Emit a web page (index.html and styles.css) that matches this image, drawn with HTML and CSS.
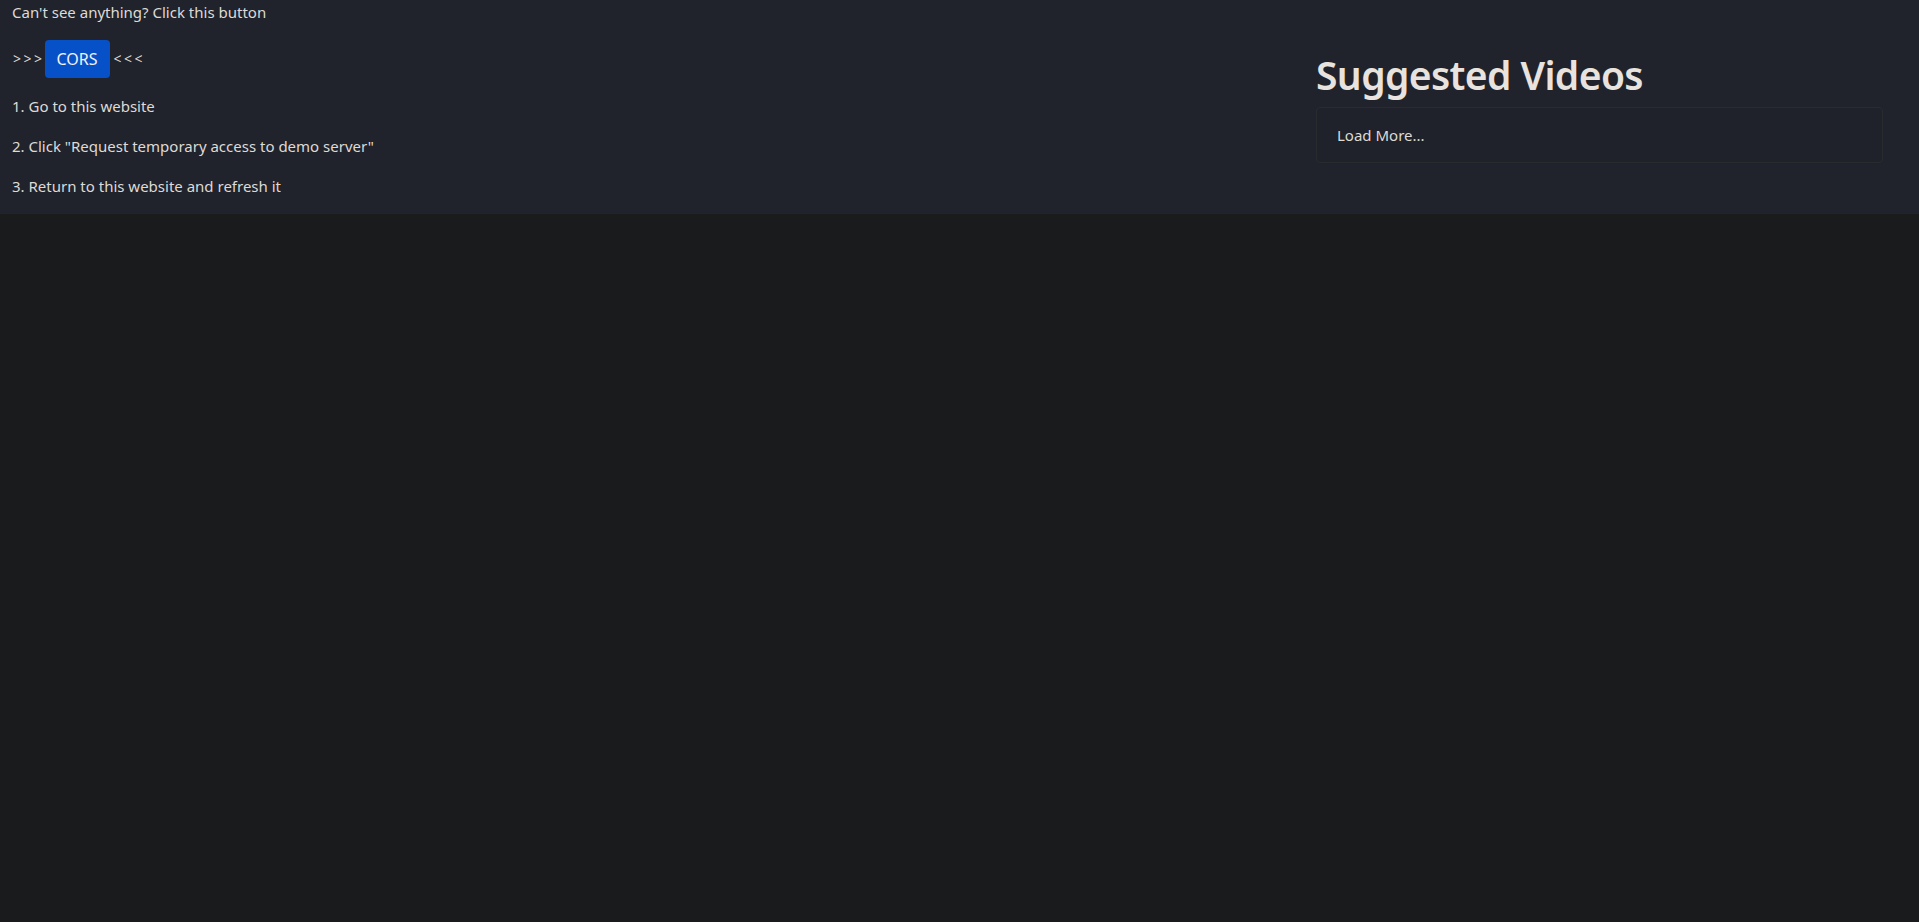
FILE: index.html
```html
<!DOCTYPE html>
<html lang="en">
<head>
<meta charset="utf-8">
<title>Videos</title>
<link rel="stylesheet" href="styles.css">
</head>
<body>
<div class="top">
  <div class="left">
    <p class="line first">Can't see anything? Click this button</p>
    <p class="line cors-row"><span class="arrows">&gt;&gt;&gt;</span><a class="btn" href="#">CORS</a><span class="arrows">&lt;&lt;&lt;</span></p>
    <p class="line">1. Go to this website</p>
    <p class="line">2. Click "Request temporary access to demo server"</p>
    <p class="line">3. Return to this website and refresh it</p>
  </div>
  <div class="right">
    <h1 class="title">Suggested Videos</h1>
    <div class="card">Load More...</div>
  </div>
</div>
</body>
</html>
```

FILE: styles.css
```css
html, body {
  margin: 0;
  padding: 0;
}
body {
  background: #1a1b1d;
  color: #dedad6;
  font-family: "Noto Sans", "Open Sans", sans-serif;
  font-size: 15px;
  line-height: 24px;
  min-height: 922px;
}
.top {
  background: #20232c;
  display: grid;
  grid-template-columns: 1fr 567px;
  padding: 0 36px 0 12px;
}
.line {
  margin: 16px 0 0 0;
  height: 24px;
  white-space: nowrap;
}
.line.first {
  margin-top: 0;
}
.left {
  padding-bottom: 16px;
}
.cors-row {
  height: 38px;
  display: flex;
  align-items: center;
}
.arrows {
  letter-spacing: 2.5px;
  font-size: 14px;
  padding-left: 1px;
}
.btn {
  display: inline-block;
  background: #0751c8;
  color: #f2f2f2;
  text-decoration: none;
  font-size: 16px;
  padding: 7px 12px;
  line-height: 24px;
  border-radius: 4px;
  margin: 0 3px 0 0;
}
.right {
  padding-top: 51px;
}
.title {
  margin: 0 0 8px 0;
  font-size: 39px;
  line-height: 48px;
  font-weight: 600;
  color: #e8e3df;
  letter-spacing: -0.6px;
}
.card {
  border: 1px solid #2a2b2f;
  border-radius: 4px;
  background: #1f222a;
  padding: 16px 20px;
  line-height: 22px;
}
```
